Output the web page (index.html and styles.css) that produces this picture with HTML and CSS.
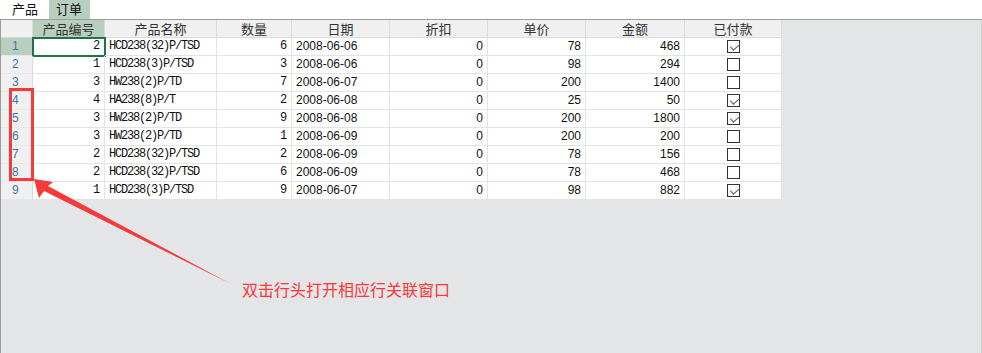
FILE: index.html
```html
<!DOCTYPE html>
<html lang="zh-CN">
<head>
    <meta charset="UTF-8">
    <title>订单</title>
    <link rel="stylesheet" href="styles.css">
</head>
<body>
    <div class="tabs">
        <span class="tab">产品</span>
        <span class="tab active">订单</span>
    </div>

    <div class="sheet">
        <div class="grid">
            <div class="hd corner"></div>
            <div class="hd sel">产品编号</div>
            <div class="hd">产品名称</div>
            <div class="hd">数量</div>
            <div class="hd">日期</div>
            <div class="hd">折扣</div>
            <div class="hd">单价</div>
            <div class="hd">金额</div>
            <div class="hd">已付款</div>

            <div class="rh sel">1</div>
            <div class="cell mono num current">2</div>
            <div class="cell mono">HCD238(32)P/TSD</div>
            <div class="cell mono num">6</div>
            <div class="cell sans">2008-06-06</div>
            <div class="cell sans num">0</div>
            <div class="cell sans num">78</div>
            <div class="cell sans num">468</div>
            <div class="cell chk"><span class="box on"></span></div>

            <div class="rh">2</div>
            <div class="cell mono num">1</div>
            <div class="cell mono">HCD238(3)P/TSD</div>
            <div class="cell mono num">3</div>
            <div class="cell sans">2008-06-06</div>
            <div class="cell sans num">0</div>
            <div class="cell sans num">98</div>
            <div class="cell sans num">294</div>
            <div class="cell chk"><span class="box"></span></div>

            <div class="rh">3</div>
            <div class="cell mono num">3</div>
            <div class="cell mono">HW238(2)P/TD</div>
            <div class="cell mono num">7</div>
            <div class="cell sans">2008-06-07</div>
            <div class="cell sans num">0</div>
            <div class="cell sans num">200</div>
            <div class="cell sans num">1400</div>
            <div class="cell chk"><span class="box"></span></div>

            <div class="rh">4</div>
            <div class="cell mono num">4</div>
            <div class="cell mono">HA238(8)P/T</div>
            <div class="cell mono num">2</div>
            <div class="cell sans">2008-06-08</div>
            <div class="cell sans num">0</div>
            <div class="cell sans num">25</div>
            <div class="cell sans num">50</div>
            <div class="cell chk"><span class="box on"></span></div>

            <div class="rh">5</div>
            <div class="cell mono num">3</div>
            <div class="cell mono">HW238(2)P/TD</div>
            <div class="cell mono num">9</div>
            <div class="cell sans">2008-06-08</div>
            <div class="cell sans num">0</div>
            <div class="cell sans num">200</div>
            <div class="cell sans num">1800</div>
            <div class="cell chk"><span class="box on"></span></div>

            <div class="rh">6</div>
            <div class="cell mono num">3</div>
            <div class="cell mono">HW238(2)P/TD</div>
            <div class="cell mono num">1</div>
            <div class="cell sans">2008-06-09</div>
            <div class="cell sans num">0</div>
            <div class="cell sans num">200</div>
            <div class="cell sans num">200</div>
            <div class="cell chk"><span class="box"></span></div>

            <div class="rh">7</div>
            <div class="cell mono num">2</div>
            <div class="cell mono">HCD238(32)P/TSD</div>
            <div class="cell mono num">2</div>
            <div class="cell sans">2008-06-09</div>
            <div class="cell sans num">0</div>
            <div class="cell sans num">78</div>
            <div class="cell sans num">156</div>
            <div class="cell chk"><span class="box"></span></div>

            <div class="rh">8</div>
            <div class="cell mono num">2</div>
            <div class="cell mono">HCD238(32)P/TSD</div>
            <div class="cell mono num">6</div>
            <div class="cell sans">2008-06-09</div>
            <div class="cell sans num">0</div>
            <div class="cell sans num">78</div>
            <div class="cell sans num">468</div>
            <div class="cell chk"><span class="box"></span></div>

            <div class="rh">9</div>
            <div class="cell mono num">1</div>
            <div class="cell mono">HCD238(3)P/TSD</div>
            <div class="cell mono num">9</div>
            <div class="cell sans">2008-06-07</div>
            <div class="cell sans num">0</div>
            <div class="cell sans num">98</div>
            <div class="cell sans num">882</div>
            <div class="cell chk"><span class="box on"></span></div>
        </div>
    </div>

    <!-- annotation drawn over the sheet -->
    <div class="mark"></div>
    <svg class="arrow" width="240" height="120" viewBox="0 0 240 120">
        <polygon points="0,0 19,3 14,7 197,105 10,12 5,19" fill="#f43a3a"/>
    </svg>
    <div class="note">双击行头打开相应行关联窗口</div>
</body>
</html>
```

FILE: styles.css
```css
* {
    margin: 0;
    padding: 0;
    box-sizing: border-box;
}

body {
    width: 982px;
    height: 353px;
    overflow: hidden;
    position: relative;
    background: #fff;
    font-family: "Noto Sans CJK SC", sans-serif;
    font-size: 12px;
    color: #222;
}

/* tabs */
.tabs {
    display: flex;
    height: 19px;
    padding-left: 5px;
    gap: 4px;
}

.tab {
    padding: 0 7px;
    line-height: 17px;
    font-size: 13px;
    color: #111;
}

.tab.active {
    background: #b8cfbf;
    height: 19px;
    padding: 0 8px 0 7px;
}

/* sheet area */
.sheet {
    height: 334px;
    background: #e4e5e7;
    border-top: 1px solid #9c9c9c;
    border-left: 1px solid #9c9c9c;
    border-right: 1px solid #d0d0d0;
}

.grid {
    display: grid;
    grid-template-columns: 32px 72px 112px 75px 98px 98px 98px 99px 97px;
    grid-auto-rows: 18px;
    width: 781px;
    background: #fff;
}

.hd {
    background: #f0f0f0;
    border-right: 1px solid #dadada;
    border-bottom: 1px solid #dadada;
    text-align: center;
    line-height: 17px;
    font-size: 13px;
    color: #333;
}

.hd.sel {
    background: #b8cfbf;
}

.rh {
    background: #f0f0f0;
    border-right: 1px solid #dadada;
    border-bottom: 1px solid #e6e6e6;
    padding-left: 11px;
    line-height: 17px;
    color: #3d76ad;
    font-family: "Liberation Sans", sans-serif;
    font-size: 12px;
}

.rh.sel {
    background: #b8cfbf;
}

.cell {
    border-right: 1px solid #e3e3e3;
    border-bottom: 1px solid #e3e3e3;
    line-height: 17px;
    padding: 0 4px;
    white-space: nowrap;
    color: #111;
}

.mono {
    font-family: "Liberation Mono", monospace;
    font-size: 12px;
    letter-spacing: -1.2px;
}

.mono.num {
    padding-right: 5px;
}

.sans {
    font-family: "Liberation Sans", sans-serif;
    font-size: 12px;
}

.num {
    text-align: right;
}

.current {
    outline: 2px solid #217346;
    outline-offset: -1px;
}

.chk {
    display: flex;
    justify-content: center;
    align-items: center;
}

.box {
    width: 13px;
    height: 13px;
    border: 1px solid #333;
    background: #fff;
    position: relative;
}

.box.on::after {
    content: "";
    position: absolute;
    left: 2px;
    top: 6px;
    width: 8px;
    height: 4px;
    border-left: 1.5px solid #555;
    border-bottom: 1.5px solid #555;
    transform: rotate(-40deg);
    transform-origin: 0 0;
}

/* annotation */
.mark {
    position: absolute;
    left: 9px;
    top: 88px;
    width: 25px;
    height: 93px;
    border: 3px solid #f43a3a;
}

.arrow {
    position: absolute;
    left: 34px;
    top: 179px;
}

.note {
    position: absolute;
    left: 242px;
    top: 278px;
    font-size: 16px;
    color: #f43a3a;
    line-height: 22px;
}
```
